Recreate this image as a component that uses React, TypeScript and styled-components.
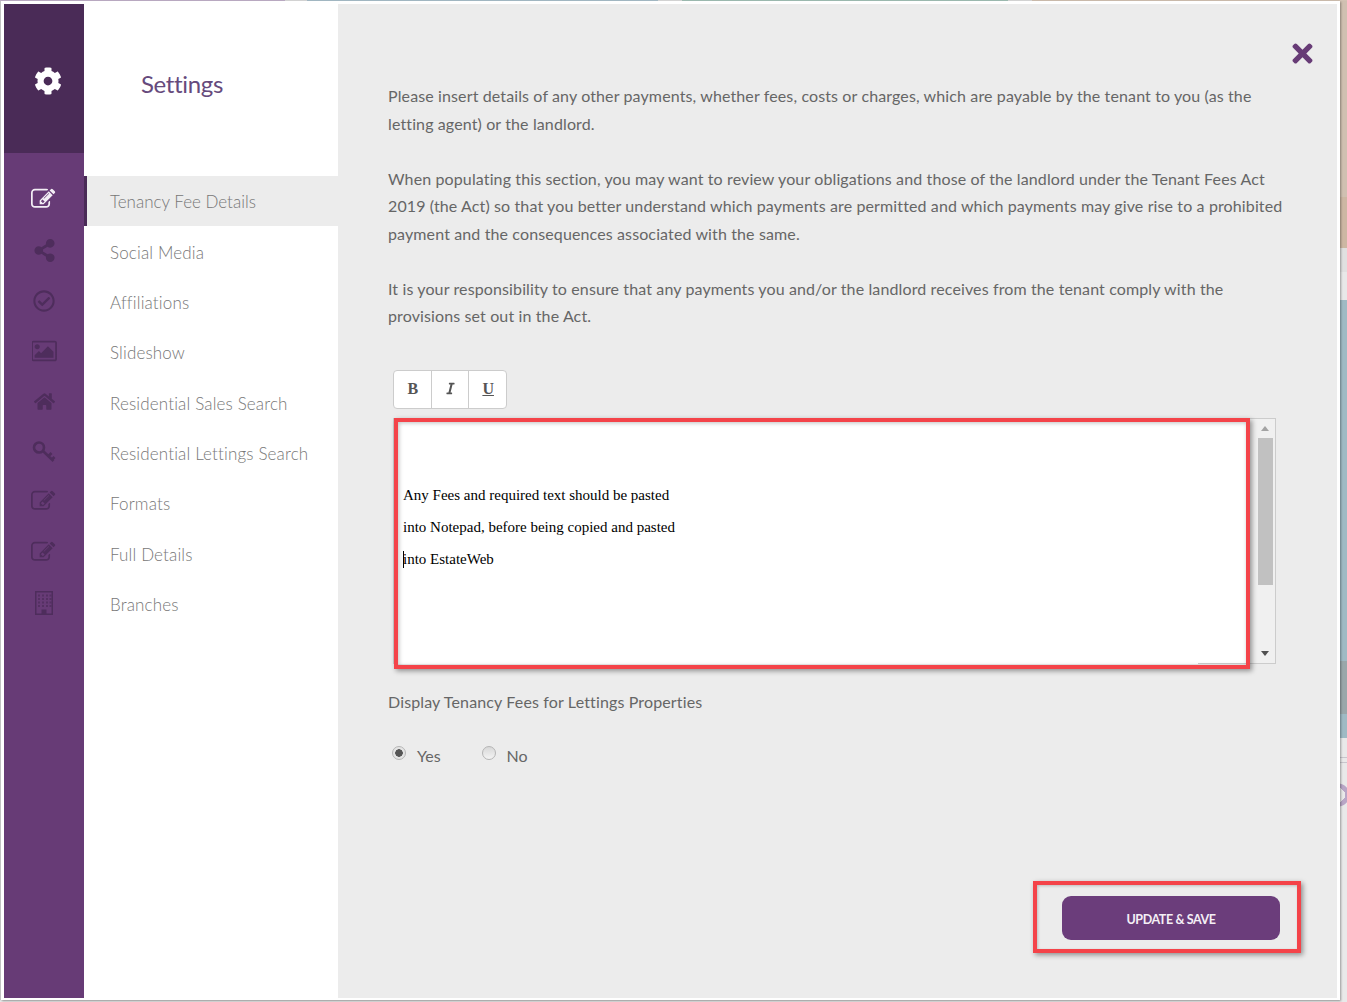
import React from "react";
import styled, { createGlobalStyle } from "styled-components";
import { FaCog, FaShareAlt, FaRegCheckCircle, FaHome, FaTimes, FaItalic } from "react-icons/fa";

const Global = createGlobalStyle`
  html, body { margin: 0; padding: 0; }
  body { font-family: "Lato", "Noto Sans", sans-serif; background: #e9e9e9; }
`;

const Page = styled.div`
  width: 1347px;
  height: 1002px;
  display: flex;
  overflow: hidden;
  background:
    linear-gradient(to right, #c2b2ca 0 285px, #dedede 285px 307px, #a9c0cb 307px 658px, #dedede 658px 682px, #a3c2b8 682px 1008px, #dedede 1008px 1032px, #d3c3b4 1032px) top left / 100% 1px no-repeat,
    radial-gradient(circle 12px at 1338px 795px, transparent 0 7px, #b9a6c6 7px 11px, transparent 12px),
    linear-gradient(to bottom, #d0c0b1 0 197px, #cdb7a3 197px 248px, #e0e0e0 248px 272px, #e8e8e8 272px 300px, #9fbac4 300px 661px, #9aa7aa 661px 714px, #9fbac4 714px 738px, #e9e9e9 738px 757px, #c8c6cc 757px 758px, #e9e9e9 758px 762px, #c8c6cc 762px 763px, #e9e9e9 763px) top right / 7px 100% no-repeat,
    #e9e9e9;
`;

const Modal = styled.div`
  width: 1339px;
  height: 999px;
  margin: 1px 0 0 1px;
  box-sizing: border-box;
  border: solid #fff;
  border-width: 3px 3px 2px 3px;
  display: flex;
  box-shadow: 1px 1px 2px rgba(0, 0, 0, 0.35), -1px 0 1px rgba(0, 0, 0, 0.15);
`;

const Rail = styled.div`
  width: 80px;
  flex: none;
  background: #673b76;
  display: flex;
  flex-direction: column;
`;

const RailHead = styled.div`
  height: 149px;
  background: #4a2b57;
  display: flex;
  align-items: center;
  justify-content: center;
  color: #fff;
  font-size: 28px;
  margin-bottom: 22px;
  padding: 5px 0 0 8px;
  box-sizing: border-box;
`;

const RailItem = styled.div<{ $active?: boolean }>`
  height: 50.375px;
  display: flex;
  align-items: center;
  justify-content: center;
  color: ${(p) => (p.$active ? "#f3eef5" : "#4e2d5c")};
`;

const Nav = styled.div`
  width: 254px;
  flex: none;
  background: #fff;
  display: flex;
  flex-direction: column;
`;

const NavHead = styled.div`
  height: 172px;
  box-sizing: border-box;
  padding: 65px 0 0 57px;
  font-size: 24px;
  line-height: 30px;
  letter-spacing: -0.35px;
  color: #664a7c;
`;

const NavItem = styled.div<{ $active?: boolean }>`
  height: 50.375px;
  box-sizing: border-box;
  display: flex;
  align-items: center;
  padding: 1px 0 0 ${(p) => (p.$active ? "23px" : "26px")};
  font-size: 17px;
  font-weight: 300;
  letter-spacing: ${(p) => (p.$active ? "0" : "0.15px")};
  color: #777;
  background: ${(p) => (p.$active ? "#ececec" : "transparent")};
  border-left: ${(p) => (p.$active ? "3px solid #4a2b57" : "none")};
  white-space: nowrap;
`;

const Content = styled.div`
  flex: 1;
  min-width: 0;
  background: #ececec;
  display: flex;
  flex-direction: column;
  padding: 0 57px 58px 50px;
`;

const CloseRow = styled.div`
  height: 78px;
  margin-right: -37px;
  box-sizing: border-box;
  padding-top: 34.5px;
  display: flex;
  justify-content: flex-end;
  color: #673b76;
  font-size: 29px;
  line-height: 0;
`;

const Copy = styled.div`
  font-size: 16px;
  line-height: 27.5px;
  letter-spacing: 0.122px;
  color: #666;
  white-space: nowrap;
`;

const Toolbar = styled.div`
  margin: 40.5px 0 9px 5px;
  width: 114px;
  height: 39px;
  box-sizing: border-box;
  display: flex;
  background: #fff;
  border: 1px solid #ccc;
  border-radius: 4px;
`;

const ToolButton = styled.div<{ $underline?: boolean }>`
  flex: 1;
  display: flex;
  align-items: center;
  justify-content: center;
  padding: 0 0 2px 1px;
  font-family: "Liberation Serif", serif;
  font-weight: bold;
  font-size: 16px;
  color: #555;
  text-decoration: ${(p) => (p.$underline ? "underline" : "none")};
  & + & { border-left: 1px solid #ccc; }
`;

const Editor = styled.div`
  position: relative;
  margin-left: 5px;
  width: 883px;
  height: 246px;
  box-sizing: border-box;
  border: 1px solid #ccc;
  border-bottom: none;
  display: flex;
`;

const EditorBody = styled.div`
  flex: 1;
  background: #fff;
  padding: 60px 0 0 9px;
  font-family: "Liberation Serif", serif;
  font-size: 15px;
  line-height: 32px;
  color: #000;
`;

const Caret = styled.span`
  display: inline-block;
  width: 1px;
  height: 17px;
  margin-right: -1px;
  background: #000;
  vertical-align: -4px;
`;

const Scrollbar = styled.div`
  width: 26px;
  flex: none;
  background: #f0f0f0;
  border-bottom: 1px solid #ccc;
  display: flex;
  flex-direction: column;
  align-items: center;
  padding: 7px 0 7px 6px;
  box-sizing: border-box;
`;

const ArrowUp = styled.div`
  border: 4px solid transparent;
  border-top: 0;
  border-bottom: 5px solid #a3a3a3;
`;

const Thumb = styled.div`
  width: 15px;
  height: 147px;
  margin-top: 7px;
  background: #c1c1c1;
`;

const ArrowDown = styled.div`
  margin-top: auto;
  border: 4px solid transparent;
  border-bottom: 0;
  border-top: 5px solid #505050;
`;

const ResizeEdge = styled.div`
  position: absolute;
  left: 804px;
  bottom: 0;
  width: 50px;
  height: 1px;
  background: #ccc;
`;

const RedBox = styled.div`
  position: absolute;
  box-sizing: border-box;
  border: 4px solid #f44349;
  box-shadow: 2px 2px 5px rgba(0, 0, 0, 0.4), inset 1px 1px 4px rgba(0, 0, 0, 0.25);
  pointer-events: none;
`;

const EditorMark = styled(RedBox)`
  left: 0;
  top: -1px;
  width: 856px;
  height: 251px;
`;

const FieldLabel = styled.div`
  margin-top: 24px;
  font-size: 16px;
  line-height: 28px;
  letter-spacing: 0.14px;
  color: #666;
`;

const RadioRow = styled.div`
  margin: 25px 0 0 4px;
  display: flex;
  align-items: center;
  font-size: 16px;
  color: #666;
  height: 28px;
`;

const Radio = styled.span<{ $on?: boolean }>`
  width: 14px;
  height: 14px;
  box-sizing: border-box;
  border-radius: 50%;
  border: 1px solid #b5b5b5;
  background: ${(p) =>
    p.$on
      ? "radial-gradient(circle, #555 0 3.5px, #e4e4e4 4px)"
      : "linear-gradient(#d8d8d8, #f4f4f4)"};
  margin: -4px 11px 0 0;
`;

const RadioText = styled.span`
  margin-right: 41px;
`;

const Footer = styled.div`
  margin-top: auto;
  display: flex;
  justify-content: flex-end;
`;

const SaveButton = styled.div`
  position: relative;
  width: 218px;
  height: 44px;
  border-radius: 9px;
  background: #6b3d7b;
  color: #f4eff6;
  display: flex;
  align-items: center;
  justify-content: center;
  padding-top: 2px;
  box-sizing: border-box;
  font-size: 12.5px;
  font-weight: 700;
  letter-spacing: -0.4px;
`;

const SaveMark = styled(RedBox)`
  left: -29px;
  top: -15px;
  right: -21px;
  bottom: -13px;
  box-shadow: 2px 2px 5px rgba(0, 0, 0, 0.4), inset 1px 1px 3px rgba(0, 0, 0, 0.2);
`;

const EditIcon = () => (
  <svg width="26" height="26" viewBox="0 64 1920 1792" fill="currentColor">
    <path d="M888 1184l116-116-152-152-116 116v56h96v96h56zm440-720q-16-16-33 1l-350 350q-17 17-1 33t33-1l350-350q17-17 1-33zm80 594v190q0 119-84.5 203.5t-203.5 84.5h-832q-119 0-203.5-84.5t-84.5-203.5v-832q0-119 84.5-203.5t203.5-84.5h832q63 0 117 25 15 7 18 23 3 17-9 29l-49 49q-14 14-32 8-23-6-45-6h-832q-66 0-113 47t-47 113v832q0 66 47 113t113 47h832q66 0 113-47t47-113v-126q0-13 9-22l64-64q15-15 35-7t20 29zm-96-738l288 288-672 672h-288v-288zm444 132l-92 92-288-288 92-92q28-28 68-28t68 28l152 152q28 28 28 68t-28 68z" />
  </svg>
);

const ImageIcon = () => (
  <svg width="25" height="24" viewBox="0 0 1856 1792" fill="currentColor">
    <path d="M576 576q0 80-56 136t-136 56-136-56-56-136 56-136 136-56 136 56 56 136zm1024 384v448h-1408v-192l320-320 160 160 512-512zm96-704h-1600q-13 0-22.5 9.5t-9.5 22.5v1216q0 13 9.5 22.5t22.5 9.5h1600q13 0 22.5-9.5t9.5-22.5v-1216q0-13-9.5-22.5t-22.5-9.5zm160 32v1216q0 66-47 113t-113 47h-1600q-66 0-113-47t-47-113v-1216q0-66 47-113t113-47h1600q66 0 113 47t47 113z" />
  </svg>
);

const KeyIcon = () => (
  <svg width="24" height="24" viewBox="0 0 24 24" fill="none" stroke="currentColor" strokeWidth="2.6">
    <circle cx="7" cy="7.5" r="5" />
    <path d="M11 11 L21.5 21 M16.5 16 L19.5 13 M20 19.5 L22.5 17" />
  </svg>
);

const BuildingIcon = () => (
  <svg width="20" height="26" viewBox="0 0 20 26" fill="currentColor">
    <path fillRule="evenodd" d="M1 1h18v24H1z M2.5 2.5v21h5v-4h5v4h5v-21z" />
    <g opacity="0.75">
      {[4.5, 8, 11.5, 15].map((y) =>
        [4.5, 8.5, 12.5, 16].map((x) => <rect key={`${x}-${y}`} x={x - 0.5} y={y} width="2" height="2" />)
      )}
    </g>
  </svg>
);

const navItems = [
  "Tenancy Fee Details",
  "Social Media",
  "Affiliations",
  "Slideshow",
  "Residential Sales Search",
  "Residential Lettings Search",
  "Formats",
  "Full Details",
  "Branches",
];

const railIcons = [
  <EditIcon />,
  <FaShareAlt size={23} />,
  <FaRegCheckCircle size={22} />,
  <ImageIcon />,
  <FaHome size={21} />,
  <KeyIcon />,
  <EditIcon />,
  <EditIcon />,
  <BuildingIcon />,
];

export default function App() {
  return (
    <Page>
      <Global />
      <Modal>
        <Rail>
          <RailHead>
            <FaCog />
          </RailHead>
          {railIcons.map((icon, i) => (
            <RailItem key={i} $active={i === 0}>
              {icon}
            </RailItem>
          ))}
        </Rail>
        <Nav>
          <NavHead>Settings</NavHead>
          {navItems.map((item, i) => (
            <NavItem key={item} $active={i === 0}>
              {item}
            </NavItem>
          ))}
        </Nav>
        <Content>
          <CloseRow>
            <FaTimes />
          </CloseRow>
          <Copy>
            Please insert details of any other payments, whether fees, costs or charges, which are payable by the tenant to you (as the
            <br />
            letting agent) or the landlord.
            <br />
            <br />
            When populating this section, you may want to review your obligations and those of the landlord under the Tenant Fees Act
            <br />
            2019 (the Act) so that you better understand which payments are permitted and which payments may give rise to a prohibited
            <br />
            payment and the consequences associated with the same.
            <br />
            <br />
            It is your responsibility to ensure that any payments you and/or the landlord receives from the tenant comply with the
            <br />
            provisions set out in the Act.
          </Copy>
          <Toolbar>
            <ToolButton>B</ToolButton>
            <ToolButton>
              <FaItalic size={13} />
            </ToolButton>
            <ToolButton $underline>U</ToolButton>
          </Toolbar>
          <Editor>
            <EditorBody>
              Any Fees and required text should be pasted
              <br />
              into Notepad, before being copied and pasted
              <br />
              <Caret />
              into EstateWeb
            </EditorBody>
            <Scrollbar>
              <ArrowUp />
              <Thumb />
              <ArrowDown />
            </Scrollbar>
            <ResizeEdge />
            <EditorMark />
          </Editor>
          <FieldLabel>Display Tenancy Fees for Lettings Properties</FieldLabel>
          <RadioRow>
            <Radio $on />
            <RadioText>Yes</RadioText>
            <Radio />
            <RadioText>No</RadioText>
          </RadioRow>
          <Footer>
            <SaveButton>
              UPDATE &amp; SAVE
              <SaveMark />
            </SaveButton>
          </Footer>
        </Content>
      </Modal>
    </Page>
  );
}
